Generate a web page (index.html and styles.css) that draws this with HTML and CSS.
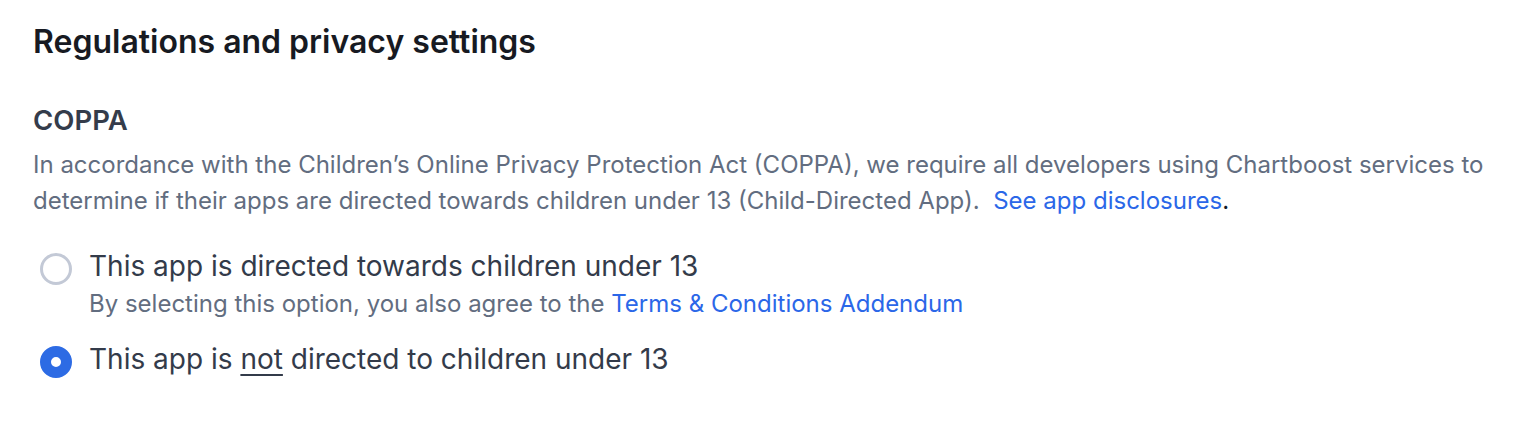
FILE: index.html
```html
<!DOCTYPE html>
<html>
<head>
<meta charset="utf-8">
<link rel="stylesheet" href="styles.css">
</head>
<body>
<div class="page">
  <h1 class="title">Regulations and privacy settings</h1>
  <section class="section">
    <h2 class="subtitle">COPPA</h2>
    <p class="desc">In accordance with the Children’s Online Privacy Protection Act (COPPA), we require all developers using Chartboost services to determine if their apps are directed towards children under 13 (Child-Directed App). &nbsp;<a class="link" href="#">See app disclosures</a><span class="dot">.</span></p>
    <div class="options">
      <label class="option">
        <span class="radio"></span>
        <span class="opt-text">
          <span class="opt-label">This app is directed towards children under 13</span>
          <span class="opt-hint">By selecting this option, you also agree to the <a class="link" href="#">Terms &amp; Conditions Addendum</a></span>
        </span>
      </label>
      <label class="option">
        <span class="radio checked"></span>
        <span class="opt-text">
          <span class="opt-label">This app is <u>not</u> directed to children under 13</span>
        </span>
      </label>
    </div>
  </section>
</div>
</body>
</html>
```
FILE: styles.css
```css
html, body {
  margin: 0;
  padding: 0;
  background: #ffffff;
}
body {
  font-family: Inter, "Noto Sans", sans-serif;
}
.page {
  padding: 22px 20px 22px 33px;
}
.title {
  margin: 0;
  font-size: 32px;
  font-weight: 600;
  line-height: 40px;
  color: #171a22;
}
.section {
  margin-top: 41px;
}
.subtitle {
  margin: 0;
  font-size: 27.5px;
  font-weight: 600;
  line-height: 34px;
  color: #343c4b;
}
.desc {
  margin: 10px 0 0;
  font-size: 24px;
  line-height: 36px;
  color: #626d80;
}
.link {
  color: #2b67e8;
  text-decoration: none;
}
.dot {
  color: #111827;
}
.options {
  margin-top: 28px;
  display: flex;
  flex-direction: column;
  gap: 17px;
}
.option {
  display: flex;
  align-items: flex-start;
  gap: 17px;
  padding-left: 7px;
}
.radio {
  flex: none;
  width: 32px;
  height: 32px;
  box-sizing: border-box;
  border-radius: 50%;
  border: 3px solid #c3c9d6;
  margin-top: 6px;
}
.radio.checked {
  border: 11px solid #2d6be4;
  background: #ffffff;
}
.opt-text {
  display: flex;
  flex-direction: column;
}
.opt-label {
  font-size: 28px;
  line-height: 38px;
  color: #333b4a;
}
.opt-label u {
  text-underline-offset: 5px;
  text-decoration-thickness: 2px;
}
.opt-hint {
  font-size: 24px;
  line-height: 38px;
  color: #626d80;
}
```
